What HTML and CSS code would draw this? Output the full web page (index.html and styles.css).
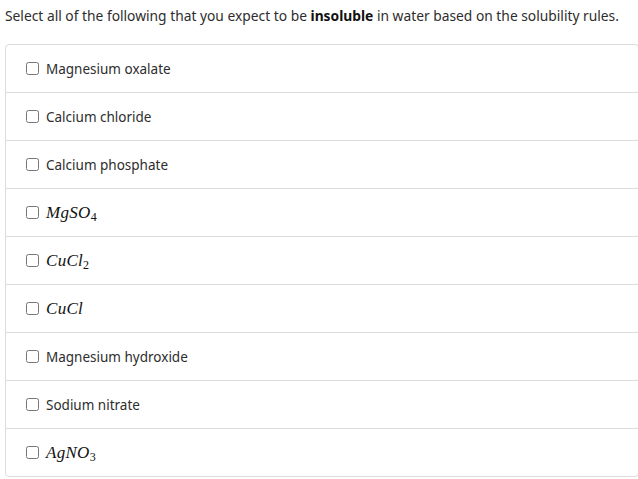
FILE: index.html
```html
<!DOCTYPE html>
<html>
<head>
<meta charset="utf-8">
<link rel="stylesheet" href="styles.css">
</head>
<body>
<p class="prompt">Select all of the following that you expect to be <strong>insoluble</strong> in water based on the solubility rules.</p>
<div class="options">
  <label class="option"><input type="checkbox"><span class="txt">Magnesium oxalate</span></label>
  <label class="option"><input type="checkbox"><span class="txt">Calcium chloride</span></label>
  <label class="option"><input type="checkbox"><span class="txt">Calcium phosphate</span></label>
  <label class="option"><input type="checkbox"><span class="math">MgSO<sub>4</sub></span></label>
  <label class="option"><input type="checkbox"><span class="math">CuCl<sub>2</sub></span></label>
  <label class="option"><input type="checkbox"><span class="math">CuCl</span></label>
  <label class="option"><input type="checkbox"><span class="txt">Magnesium hydroxide</span></label>
  <label class="option"><input type="checkbox"><span class="txt">Sodium nitrate</span></label>
  <label class="option"><input type="checkbox"><span class="math">AgNO<sub>3</sub></span></label>
</div>
</body>
</html>
```
FILE: styles.css
```css
html, body {
  margin: 0;
  padding: 0;
  background: #fff;
  overflow: hidden;
}
body {
  font-family: "Noto Sans", "Open Sans", sans-serif;
  font-size: 13.5px;
  color: #2d2d2d;
  padding: 0 0 0 5px;
}
.prompt {
  margin: 0;
  padding: 6px 0 0 0;
  height: 44px;
  box-sizing: border-box;
  line-height: 20px;
  font-size: 13.8px;
}
.prompt strong {
  font-weight: 700;
  color: #111;
}
.options {
  border: 1px solid #dcdcdc;
  border-radius: 4px;
  width: 634px;
  box-sizing: border-box;
}
.option {
  display: flex;
  align-items: center;
  height: 47px;
  padding-left: 20px;
  border-top: 1px solid #dcdcdc;
}
.option:first-child {
  border-top: none;
}
.option input {
  margin: 0 7px 0 0;
  width: 13px;
  height: 13px;
}
.math {
  font-family: "Liberation Serif", "DejaVu Serif", serif;
  font-style: italic;
  font-size: 17px;
  color: #111;
  letter-spacing: 0.3px;
}
.math sub {
  font-style: normal;
  font-size: 12px;
  vertical-align: -3px;
  line-height: 0;
}
```
